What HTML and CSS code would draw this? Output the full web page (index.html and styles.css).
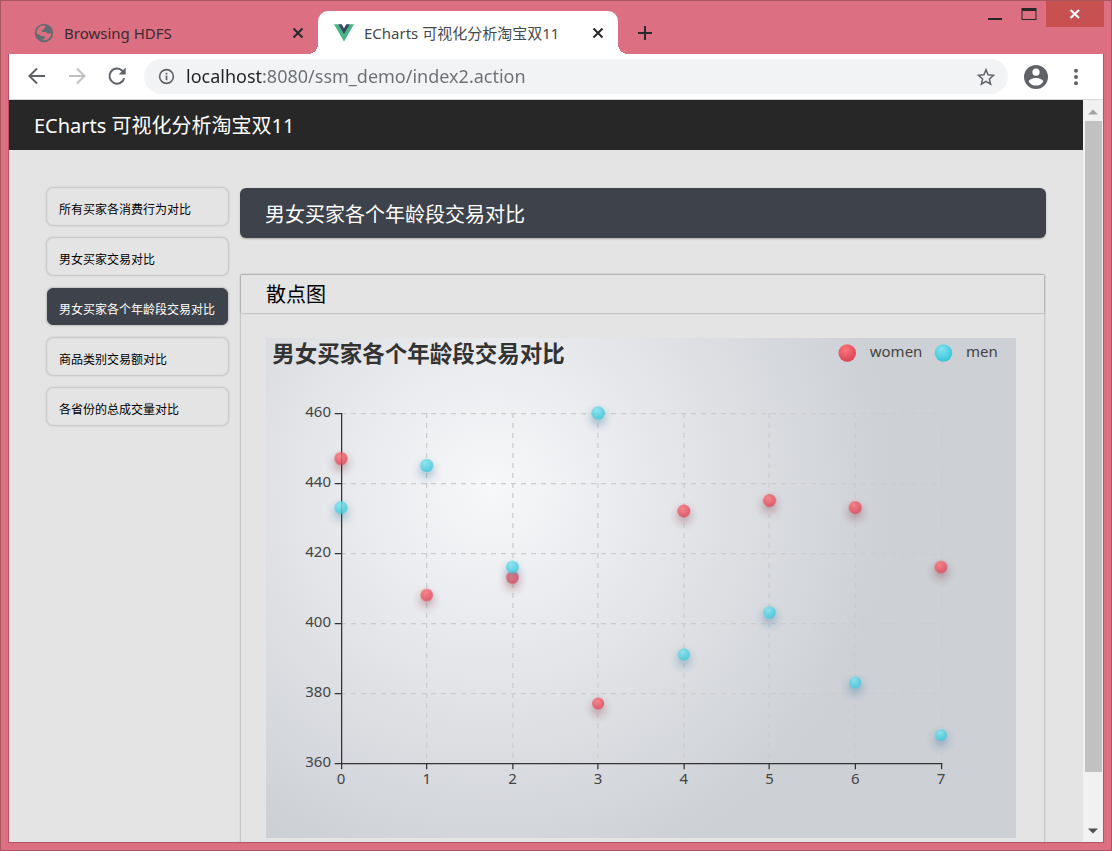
FILE: index.html
```html
<!DOCTYPE html>
<html lang="zh-CN">
<head>
<meta charset="utf-8">
<meta name="viewport" content="width=device-width, initial-scale=1">
<title>ECharts 可视化分析淘宝双11</title>
<link rel="stylesheet" href="styles.css">
</head>
<body>
<div class="window">
  <header class="tabstrip">
    <div class="tab">
      <svg class="favicon" viewBox="0 0 20 20" aria-hidden="true"><circle cx="10" cy="10" r="9.2" fill="#636b70"/><path d="M10.500 2.600c1.600.3 1.200 1.600.2 2.200-1 .6-.6 1.500-2 2C7.400 7.300 7.200 8.900 8.600 9h2.600c1.600.1 1.700 1.700 3.100 1.700 1.400 0 1.700-.7 3-.7-.1 3-1.900 5.700-4.900 6.900-1.800.5-3.600.4-5.200-.4 1.500.2 3.400-.2 3.700-1.500.2-1.500-1.300-1.900-2.900-2-2.200-.2-2.900-2.300-5.400-2.600C2.500 6 5.500 2.600 10.500 2.600z" fill="#dc6f81"/></svg>
      <button class="tab-title" type="button">Browsing HDFS</button>
      <button class="icon-button" type="button" aria-label="Close Browsing HDFS"><svg class="close" viewBox="0 0 12 12"><path d="M1.500 1.500l9 9M10.500 1.500l-9 9"/></svg></button>
    </div>
    <div class="tab tab-active">
      <svg class="favicon" viewBox="0 0 20 20" aria-hidden="true"><path d="M0 1.200h4L10 11.500 16 1.200h4L10 18.500z" fill="#41b883"/><path d="M4 1.200h3.700L10 5.200l2.300-4H16L10 11.500z" fill="#35495e"/></svg>
      <button class="tab-title" type="button">ECharts 可视化分析淘宝双11</button>
      <button class="icon-button" type="button" aria-label="Close ECharts"><svg class="close" viewBox="0 0 12 12"><path d="M1.500 1.500l9 9M10.500 1.500l-9 9"/></svg></button>
    </div>
    <button class="icon-button new-tab" type="button" aria-label="New tab"><svg class="plus" viewBox="0 0 16 16"><path d="M8 1v14M1 8h14"/></svg></button>
    <div class="window-controls">
      <button class="control" type="button" aria-label="Minimize"><svg viewBox="0 0 16 14"><path d="M1 11h14v2H1z" fill="#272727"/></svg></button>
      <button class="control" type="button" aria-label="Maximize"><svg viewBox="0 0 16 14"><path d="M.5 1h15v12H.5zM1.500 4v8h13V4z" fill="#272727" fill-rule="evenodd"/></svg></button>
      <button class="control control-close" type="button" aria-label="Close window"><svg viewBox="0 0 16 14"><path d="M3.500 3l8.500 8M12 3l-8.500 8" stroke="#fff" stroke-width="2.200"/></svg></button>
    </div>
  </header>

  <div class="shell">
    <nav class="toolbar" aria-label="Browser toolbar">
      <button class="icon-button" type="button" aria-label="Back"><svg class="tool" viewBox="0 0 20 20"><path d="M18 9H3M10 1.500L2.500 9l7.500 7.500"/></svg></button>
      <button class="icon-button disabled" type="button" aria-label="Forward" disabled><svg class="tool" viewBox="0 0 20 20"><path d="M2 9h15M10 1.500l7.500 7.500-7.500 7.500"/></svg></button>
      <button class="icon-button" type="button" aria-label="Reload"><svg class="tool" viewBox="0 0 20 20"><path d="M17.200 11.200A7.500 7.500 0 1 1 15.500 4L17 5.500"/><path d="M18.700 .5v7h-7z" fill="#5f6368" stroke="none"/></svg></button>
      <div class="omnibox">
        <svg class="info" viewBox="0 0 18 18" aria-hidden="true"><circle cx="9" cy="9" r="7.300" fill="none" stroke="#5f6368" stroke-width="1.700"/><path d="M8.100 8h1.800v5H8.100zM8.100 5h1.800v1.800H8.100z" fill="#5f6368"/></svg>
        <input class="address" type="text" aria-label="Address" value="localhost:8080/ssm_demo/index2.action">
        <button class="icon-button" type="button" aria-label="Bookmark"><svg class="tool" viewBox="0 0 20 20"><path d="M10 2.800l2.100 5 5.400.5-4.100 3.600 1.200 5.300L10 14.400l-4.600 2.800 1.200-5.300-4.100-3.600 5.400-.5z" stroke-width="1.500"/></svg></button>
      </div>
      <button class="icon-button" type="button" aria-label="Profile"><svg class="avatar" viewBox="0 0 24 24"><path fill="#5f6368" fill-rule="evenodd" d="M12 0a12 12 0 1 0 0 24 12 12 0 0 0 0-24zm0 3.600a3.600 3.600 0 1 1 0 7.200 3.600 3.600 0 0 1 0-7.200zM12 20.600a8.600 8.600 0 0 1-7.200-3.900c0-2.400 4.800-3.700 7.200-3.700s7.200 1.300 7.200 3.700a8.600 8.600 0 0 1-7.200 3.900z"/></svg></button>
      <button class="icon-button" type="button" aria-label="Menu"><svg class="tool" viewBox="0 0 20 20"><g fill="#5f6368" stroke="none"><circle cx="10" cy="3.700" r="2"/><circle cx="10" cy="10" r="2"/><circle cx="10" cy="16.300" r="2"/></g></svg></button>
    </nav>

    <div class="viewport">
      <div class="page">
        <h1 class="page-header">ECharts 可视化分析淘宝双11</h1>
        <div class="content">
          <nav class="side" aria-label="图表">
            <a class="side-link" href="#all">所有买家各消费行为对比</a>
            <a class="side-link" href="#gender">男女买家交易对比</a>
            <a class="side-link current" href="#age" aria-current="page">男女买家各个年龄段交易对比</a>
            <a class="side-link" href="#category">商品类别交易额对比</a>
            <a class="side-link" href="#province">各省份的总成交量对比</a>
          </nav>
          <main class="main">
            <h2 class="banner">男女买家各个年龄段交易对比</h2>
            <section class="panel">
              <h3 class="panel-title">散点图</h3>
              <div class="panel-body">
                <svg class="chart" viewBox="0 0 600 400" role="img" aria-label="男女买家各个年龄段交易对比">
                  <defs>
                    <radialGradient id="backdrop" gradientUnits="userSpaceOnUse" cx="180" cy="120" r="320"><stop offset="0" stop-color="#f7f8fa"/><stop offset="1" stop-color="#cdd0d5"/></radialGradient>
                    <radialGradient id="red" cx=".4" cy=".3" r="1"><stop offset="0" stop-color="#fb767b"/><stop offset="1" stop-color="#cc2e48"/></radialGradient>
                    <radialGradient id="cyan" cx=".4" cy=".3" r="1"><stop offset="0" stop-color="#81e3ee"/><stop offset="1" stop-color="#19b7cf"/></radialGradient>
                  </defs>
                  <rect width="600" height="400" fill="url(#backdrop)"/>
                  <text class="chart-title" x="5" y="19">男女买家各个年龄段交易对比</text>
                  <circle cx="465" cy="12" r="7" fill="url(#red)"/><text class="label" x="483" y="15">women</text>
                  <circle cx="542" cy="12" r="7" fill="url(#cyan)"/><text class="label" x="560" y="15">men</text>
                  <g id="grid" class="grid"></g>
                  <path class="axis" d="M60.500 60v280.500M60 340.500h481"/>
                  <g id="ticks" class="axis"></g>
                  <g id="labels" class="label"></g>
                  <g id="women" class="women"></g>
                  <g id="men" class="men"></g>
                </svg>
              </div>
            </section>
          </main>
        </div>
      </div>
      <div class="scrollbar" aria-hidden="true">
        <svg class="arrow" viewBox="0 0 20 20"><path d="M5 14l5-5 5 5z" fill="#a3a3a3"/></svg>
        <div class="track"><div class="thumb"></div></div>
        <svg class="arrow" viewBox="0 0 20 20"><path d="M5 7l5 5 5-5z" fill="#505050"/></svg>
      </div>
    </div>
  </div>
</div>
<script src="chart.js"></script>
</body>
</html>
```

FILE: styles.css
```css
* { box-sizing: border-box; }
body, h1, h2, h3 { margin: 0; font-weight: 400; }
body { font-family: "Noto Sans", "Noto Sans CJK SC", sans-serif; color: #000; }
button { border: 0; padding: 0; background: none; font: inherit; color: inherit; }
svg { display: block; }

.window { display: flex; flex-direction: column; height: 100vh; padding: 0 7px 7px; border: 1px solid #a85562; background: #dc6f81; overflow: hidden; }

.tabstrip { display: flex; align-items: flex-end; flex: 0 0 53px; padding-left: 10px; }
.tab { display: flex; align-items: center; width: 300px; height: 43px; padding: 0 14px 0 16px; font-size: 15px; color: #3c2a30; }
.tab-active { position: relative; border-radius: 10px 10px 0 0; background: #fff; color: #45494d; }
.tab-active::before, .tab-active::after { content: ""; position: absolute; bottom: 0; width: 10px; height: 10px; }
.tab-active::before { right: 100%; background: radial-gradient(circle at 0 0, transparent 10px, #fff 10px); }
.tab-active::after { left: 100%; background: radial-gradient(circle at 100% 0, transparent 10px, #fff 10px); }
.favicon { flex: none; width: 20px; height: 20px; margin-right: 10px; }
.tab-title { flex: 1; min-width: 0; text-align: left; white-space: nowrap; overflow: hidden; }
.icon-button { display: flex; flex: none; align-items: center; justify-content: center; }
.close { width: 12px; height: 12px; fill: none; stroke: #272a2d; stroke-width: 2; }
.plus { width: 16px; height: 16px; fill: none; stroke: #272a2d; stroke-width: 2; }
.new-tab { width: 54px; height: 43px; }
.window-controls { display: flex; align-self: flex-start; margin-left: auto; }
.control { display: flex; align-items: center; justify-content: center; width: 34px; height: 26px; }
.control svg { width: 16px; height: 14px; }
.control-close { width: 58px; background: #c75050; }

.shell { display: flex; flex: 1; flex-direction: column; min-height: 0; border: 1px solid #b45362; border-top: 0; background: #fff; }
.toolbar { display: flex; align-items: center; gap: 20px; flex: 0 0 46px; padding: 0 17px 0 18px; border-bottom: 1px solid #d5d7da; }
.tool { width: 20px; height: 20px; fill: none; stroke: #5f6368; stroke-width: 2; }
.disabled { opacity: .4; }
.omnibox { display: flex; flex: 1; align-items: center; gap: 11px; min-width: 0; height: 35px; margin: 0 -4px 0 -3px; padding: 0 12px 0 14px; border-radius: 18px; background: #f1f3f4; }
.info { flex: none; width: 17px; height: 17px; }
.address { flex: 1; min-width: 0; padding: 0 0 2px; border: 0; outline: 0; font: 18px "Noto Sans", sans-serif; color: transparent; background: linear-gradient(90deg, #202124 76px, #6b6f73 76px); -webkit-background-clip: text; background-clip: text; }
.avatar { width: 24px; height: 24px; }
.toolbar > :last-child { margin-left: -2px; }

.viewport { display: flex; flex: 1; min-height: 0; }
.page { flex: 1; min-width: 0; overflow: hidden; background: #e4e4e4; }
.page-header { height: 50px; padding-left: 25px; background: #272727; color: #fff; font-size: 20px; line-height: 52px; }
.content { display: flex; align-items: flex-start; gap: 12px; padding: 38px 37px 0 38px; }
.side { display: flex; flex: 0 0 181px; flex-direction: column; gap: 13px; }
.side-link { height: 37px; padding: 3px 0 0 11px; border: 1px solid #e0e0e0; border-radius: 6px; box-shadow: 0 0 2px 1px #c2c2c2; background: #e4e4e4; font-size: 12px; line-height: 35px; color: #000; text-decoration: none; white-space: nowrap; }
.current { border-color: #3e424b; background: #3e424b; color: #fff; }
.main { flex: 1; min-width: 0; }
.banner { height: 50px; padding-left: 25px; border-radius: 6px; background: #3e424b; box-shadow: 0 1px 2px #aaa; color: #fff; font-size: 20px; line-height: 54px; }
.panel { margin: 37px 2px 0 1px; box-shadow: 0 0 2px #888; }
.panel-title { height: 38px; padding-left: 25px; box-shadow: 0 0 2px #888; font-size: 20px; line-height: 40px; }
.panel-body { padding: 25px 28px 25px 25px; }
.chart { width: 100%; }

.scrollbar { display: flex; flex: 0 0 20px; flex-direction: column; background: #f1f1f1; }
.arrow { width: 20px; height: 21px; }
.track { flex: 1; padding: 0 1px 0 2px; }
.thumb { height: 93%; background: #c1c1c1; }

.chart-title { font-size: 18px; font-weight: 700; fill: #333; }
.label { font-size: 12px; fill: #444; }
.axis { fill: none; stroke: #333; stroke-width: 1; }
.grid { fill: none; stroke: #ccc; stroke-width: 1; stroke-dasharray: 4 4; }
.women { fill: url(#red); opacity: .85; }
.men { fill: url(#cyan); opacity: .85; }
.women circle { filter: drop-shadow(0 4px 4px rgba(120, 36, 50, .5)); }
.men circle { filter: drop-shadow(0 4px 4px rgba(25, 100, 150, .5)); }
```

FILE: chart.js
```javascript
const NS = "http://www.w3.org/2000/svg";
const xAt = i => 60 + (i * 480) / 7;
const yAt = v => 60 + (460 - v) * 2.8;

function add(parent, tag, attrs, text) {
  const node = document.createElementNS(NS, tag);
  for (const key in attrs) node.setAttribute(key, attrs[key]);
  if (text !== undefined) node.textContent = text;
  document.getElementById(parent).appendChild(node);
}

for (let v = 360; v <= 460; v += 20) {
  const y = Math.round(yAt(v)) + 0.5;
  if (v > 360) add("grid", "path", { d: `M60 ${y}H540` });
  add("ticks", "path", { d: `M55 ${y}h5` });
  add("labels", "text", { x: 52, y: y + 3, "text-anchor": "end" }, v);
}

for (let i = 0; i <= 7; i++) {
  const x = Math.floor(xAt(i)) + 0.5;
  if (i > 0) add("grid", "path", { d: `M${x} 60V340` });
  add("ticks", "path", { d: `M${x} 340v5` });
  add("labels", "text", { x: xAt(i), y: 357, "text-anchor": "middle" }, i);
}

const series = {
  women: [447, 408, 413, 377, 432, 435, 433, 416],
  men: [433, 445, 416, 460, 391, 403, 383, 368]
};

for (const name in series) {
  series[name].forEach((v, i) => {
    add(name, "circle", { cx: xAt(i), cy: yAt(v), r: Math.sqrt(v) / 4 });
  });
}
```
